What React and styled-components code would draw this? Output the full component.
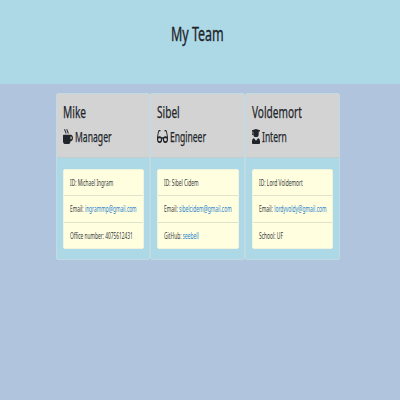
import React from "react";
import styled, { createGlobalStyle } from "styled-components";
import { FaMugHot, FaGlasses } from "react-icons/fa";

const GlobalStyle = createGlobalStyle`
  * { box-sizing: border-box; }
  body {
    margin: 0;
    background: #b0c4de;
    color: #212529;
    font-family: "Noto Sans", "Open Sans", sans-serif;
    overflow: hidden;
  }
`;

const Page = styled.div`
  height: 400px;
  background: #b0c4de;
`;

const Banner = styled.header`
  height: 84px;
  padding: 20px 0 0 171px;
  background: #add8e6;
`;

const Condensed = styled.span`
  display: block;
  width: max-content;
  white-space: nowrap;
  transform: scaleX(${(p) => p.$scale});
  transform-origin: 0 50%;
`;

const Title = styled.h1`
  margin: 0;
  font-size: 20px;
  line-height: 28px;
  font-weight: 400;
  -webkit-text-stroke: 0.35px currentColor;
`;

const Team = styled.main`
  display: grid;
  grid-template-columns: 94px 95px 95px;
  width: 284px;
  height: 167px;
  margin: 9px 0 0 56px;
`;

const Card = styled.section`
  background: #add8e6;
  border: 1px solid #c2dae3;
  border-radius: 2px;
  overflow: hidden;
`;

const CardHeader = styled.div`
  height: 64px;
  padding: 6px 0 0 6px;
  background: #d3d3d3;
  border-bottom: 1px solid #c3cdd0;
`;

const Name = styled.h2`
  margin: 0;
  font-size: 17px;
  line-height: 24px;
  font-weight: 400;
  -webkit-text-stroke: 0.25px currentColor;
`;

const Role = styled.h3`
  display: flex;
  align-items: center;
  gap: 2px;
  height: 24px;
  margin: 0;
  font-size: 14.5px;
  line-height: 24px;
  font-weight: 400;
  -webkit-text-stroke: 0.25px currentColor;

  svg {
    flex: none;
    width: ${(p) => p.$icon}px;
    height: 15px;
    stroke: none;
  }
`;

const Details = styled.ul`
  width: ${(p) => p.$width}px;
  height: 80px;
  margin: 11px 0 0 6px;
  padding: 0;
  list-style: none;
  display: grid;
  grid-template-columns: minmax(0, 1fr);
  grid-template-rows: 26px 27px 25px;
  background: #ffffe0;
  border: 1px solid #f0f3dd;
  border-radius: 2px;
`;

const Detail = styled.li`
  padding-left: 6px;
  font-size: 8.6px;
  line-height: 26px;
  border-bottom: 1px solid #e0e3cc;
  color: #33373a;

  &:last-child { border-bottom: 0; }
`;

const Link = styled.a`
  color: #2580cc;
  text-decoration: none;
`;

function GraduateIcon() {
  return (
    <svg viewBox="0 0 8 15" fill="currentColor" preserveAspectRatio="none">
      <path d="M0 1.3 4 0l4 1.3v1L6.7 2.8v2.4A2.7 2.9 0 0 1 1.3 5.2V2.8L.9 2.7v1.7L1.2 6H0l.3-1.6V2.4L0 2.3Z" />
      <path d="M2 9.2 4 11.8 6 9.2c1.3.2 2 1.5 2 3.2V14c0 .6-.3 1-.8 1H.8C.3 15 0 14.6 0 14v-1.6c0-1.7.7-3 2-3.2Z" />
    </svg>
  );
}

const members = [
  {
    name: "Mike", role: "Manager", Icon: FaMugHot, icon: 10, width: 81,
    nameScale: 0.6, roleScale: 0.595, detailScale: 0.56,
    details: [
      ["ID: ", "Michael Ingram", false],
      ["Email: ", "ingrammp@gmail.com", true],
      ["Office number: ", "4075612431", false],
    ],
  },
  {
    name: "Sibel", role: "Engineer", Icon: FaGlasses, icon: 11, width: 82,
    nameScale: 0.595, roleScale: 0.59, detailScale: 0.565,
    details: [
      ["ID: ", "Sibel Cidem", false],
      ["Email: ", "sibelcidem@gmail.com", true],
      ["GitHub: ", "seebell", true],
    ],
  },
  {
    name: "Voldemort", role: "Intern", Icon: GraduateIcon, icon: 8, width: 81,
    nameScale: 0.595, roleScale: 0.585, detailScale: 0.57,
    details: [
      ["ID: ", "Lord Voldemort", false],
      ["Email: ", "lordyvoldy@gmail.com", true],
      ["School: ", "UF", false],
    ],
  },
];

function Member({ name, role, Icon, icon, width, nameScale, roleScale, detailScale, details }) {
  return (
    <Card>
      <CardHeader>
        <Name><Condensed $scale={nameScale}>{name}</Condensed></Name>
        <Role $icon={icon}>
          <Icon preserveAspectRatio="none" />
          <Condensed $scale={roleScale}>{role}</Condensed>
        </Role>
      </CardHeader>
      <Details $width={width}>
        {details.map(([label, value, linked]) => (
          <Detail key={label}>
            <Condensed $scale={detailScale}>
              {label}
              {linked ? <Link>{value}</Link> : value}
            </Condensed>
          </Detail>
        ))}
      </Details>
    </Card>
  );
}

export default function App() {
  return (
    <Page>
      <GlobalStyle />
      <Banner>
        <Title><Condensed $scale={0.625}>My Team</Condensed></Title>
      </Banner>
      <Team>
        {members.map((m) => <Member key={m.name} {...m} />)}
      </Team>
    </Page>
  );
}
